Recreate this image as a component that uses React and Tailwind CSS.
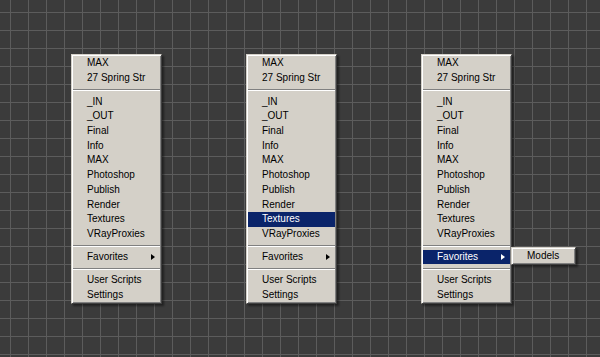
import React from 'react'
import clsx from 'clsx'

const FOLDERS = ['_IN', '_OUT', 'Final', 'Info', 'MAX', 'Photoshop', 'Publish', 'Render', 'Textures', 'VRayProxies']

function Row({ label, active, arrow }) {
  return (
    <div
      className={clsx(
        'h-[14.7px] flex items-center pl-[14px] pr-[5px] whitespace-nowrap',
        active ? 'bg-[#0a246a] text-white' : 'text-black'
      )}
    >
      <span>{label}</span>
      {arrow && (
        <span
          className={clsx(
            'ml-auto w-0 h-0 border-y-[3.5px] border-y-transparent border-l-[4px]',
            active ? 'border-l-white' : 'border-l-black'
          )}
        />
      )}
    </div>
  )
}

function Separator({ tall }) {
  return (
    <div className={clsx('flex items-center', tall ? 'h-[9px]' : 'h-[8.5px]')}>
      <div className="w-full border-t border-t-[#808080] border-b border-b-white" />
    </div>
  )
}

function Panel({ children, className }) {
  return (
    <div
      className={clsx(
        'bg-[#d4d0c8] border border-t-[#d4d0c8] border-l-[#d4d0c8] border-r-[#404040] border-b-[#404040] shadow-[inset_1px_1px_0_#ffffff,inset_-1px_-1px_0_#808080,2px_2px_2px_rgba(0,0,0,0.45)] p-[1px]',
        className
      )}
    >
      {children}
    </div>
  )
}

function FolderMenu({ hover }) {
  return (
    <Panel className="w-[91px]">
      <Row label="MAX" />
      <Row label="27 Spring Str" />
      <Separator tall />
      {FOLDERS.map((f) => (
        <Row key={f} label={f} active={hover === f} />
      ))}
      <Separator />
      <div className="relative">
        <Row label="Favorites" arrow active={hover === 'Favorites'} />
        {hover === 'Favorites' && (
          <div className="absolute left-[88px] top-[-3px]">
            <Panel className="w-[65px]">
              <Row label="Models" />
            </Panel>
          </div>
        )}
      </div>
      <Separator />
      <Row label="User Scripts" />
      <Row label="Settings" />
    </Panel>
  )
}

export default function App() {
  return (
    <div
      className="w-[600px] h-[357px] overflow-hidden bg-[#3b3b3b] [background-image:linear-gradient(to_right,#5c5c5c_1px,transparent_1px),linear-gradient(to_bottom,#5c5c5c_1px,transparent_1px)] [background-size:18px_18px] [background-position:10px_12px] text-[10px] leading-none"
      style={{ fontFamily: '"Liberation Sans", Arial, sans-serif' }}
    >
      <div className="flex gap-[84px] pt-[54px] pl-[71px]">
        <FolderMenu />
        <FolderMenu hover="Textures" />
        <FolderMenu hover="Favorites" />
      </div>
    </div>
  )
}
